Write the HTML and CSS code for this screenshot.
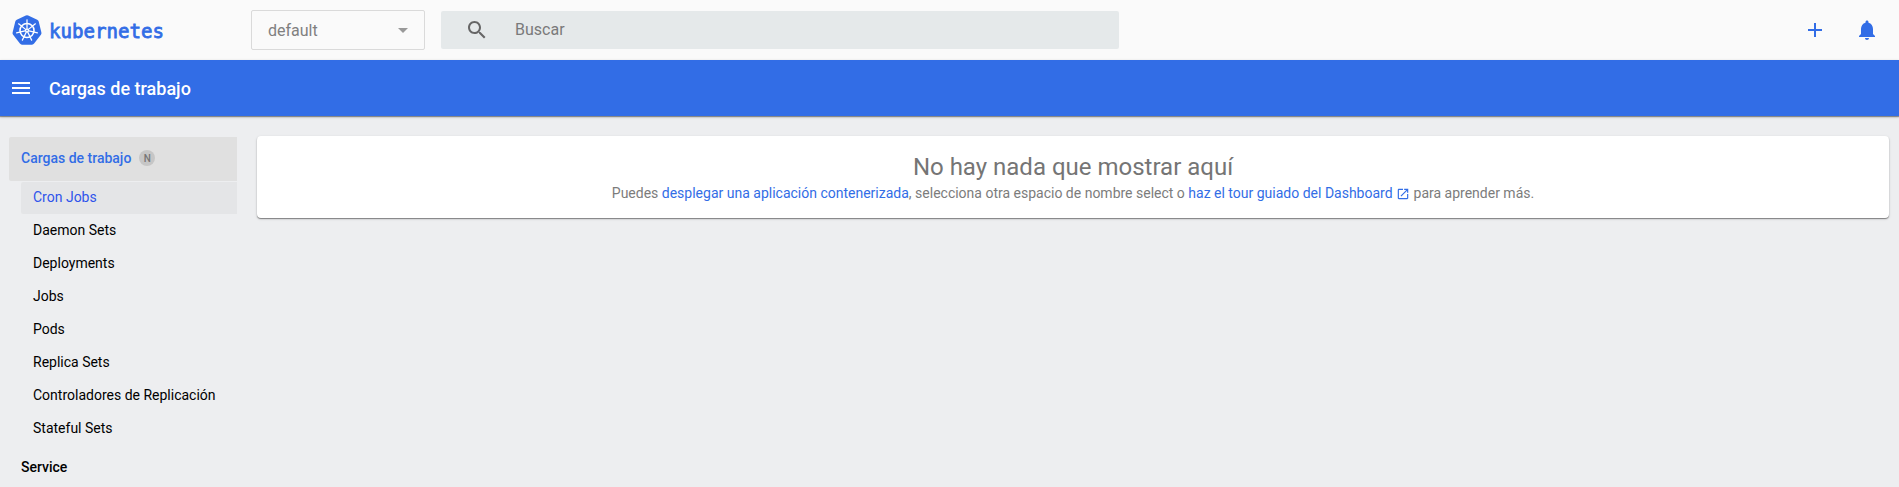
FILE: index.html
```html
<!DOCTYPE html>
<html lang="es">
<head>
<meta charset="utf-8">
<title>Kubernetes Dashboard</title>
<link rel="stylesheet" href="styles.css">
</head>
<body>
<header class="topbar">
  <a class="brand">
    <svg class="brand-mark" width="30" height="30" viewBox="0 0 30 30">
      <path d="M13.8.4Q15 0 16.2.4L25.2 4.7Q26.4 5.3 26.7 6.6L29.4 17.5Q29.7 18.7 28.9 19.8L22.1 28.6Q21.3 29.7 20 29.7H10Q8.700 29.7 7.900 28.6L1.100 19.800Q.3 18.700.6 17.500L3.300 6.600Q3.600 5.300 4.800 4.700Z" fill="#326de6"/>
      <g fill="none" stroke="#fff">
        <circle cx="15" cy="15.500" r="7" stroke-width="1.600"/>
        <g stroke-width="1.250" stroke-linecap="round">
          <path d="M15 14.500V4.800"/>
          <path d="M15 14.500V4.800" transform="rotate(51.430 15 15.500)"/>
          <path d="M15 14.500V4.800" transform="rotate(102.860 15 15.500)"/>
          <path d="M15 14.500V4.800" transform="rotate(154.290 15 15.500)"/>
          <path d="M15 14.500V4.800" transform="rotate(205.710 15 15.500)"/>
          <path d="M15 14.500V4.800" transform="rotate(257.140 15 15.500)"/>
          <path d="M15 14.500V4.800" transform="rotate(308.570 15 15.500)"/>
        </g>
      </g>
      <circle cx="15" cy="15.500" r="2" fill="#fff"/>
      <circle cx="15" cy="15.500" r=".7" fill="#326de6"/>
    </svg>
    <svg class="brand-name" width="122" height="30" viewBox="0 0 122 30">
      <text x="0" y="22.500" textLength="115" lengthAdjust="spacingAndGlyphs">kubernetes</text>
    </svg>
  </a>
  <div class="namespace"><span>default</span><i class="caret"></i></div>
  <div class="search">
    <svg width="24" height="24" viewBox="0 0 24 24"><path fill="#666" d="M15.500 14h-.79l-.28-.27C15.410 12.590 16 11.110 16 9.500 16 5.910 13.090 3 9.500 3S3 5.910 3 9.500 5.910 16 9.500 16c1.610 0 3.090-.59 4.230-1.570l.27.28v.79l5 4.990L20.490 19l-4.990-5zm-6 0C7.010 14 5 11.990 5 9.500S7.010 5 9.500 5 14 7.010 14 9.500 11.990 14 9.500 14z"/></svg>
    <span>Buscar</span>
  </div>
  <div class="actions">
    <svg width="24" height="24" viewBox="0 0 24 24"><path fill="#326de6" d="M19 13h-6v6h-2v-6H5v-2h6V5h2v6h6v2z"/></svg>
    <svg width="24" height="24" viewBox="0 0 24 24"><path fill="#326de6" d="M12 22c1.100 0 2-.9 2-2h-4c0 1.100.89 2 2 2zm6-6v-5c0-3.070-1.640-5.640-4.500-6.320V4c0-.83-.67-1.500-1.500-1.500s-1.500.67-1.500 1.500v.68C7.630 5.360 6 7.920 6 11v5l-2 2v1h16v-1l-2-2z"/></svg>
  </div>
</header>
<div class="titlebar">
  <svg width="24" height="24" viewBox="0 0 24 24"><path fill="#fff" d="M3 18h18v-2H3v2zm0-5h18v-2H3v2zm0-7v2h18V6H3z"/></svg>
  <h1>Cargas de trabajo</h1>
</div>
<div class="layout">
  <nav class="sidebar">
    <a class="group active">Cargas de trabajo<span class="badge">N</span></a>
    <div class="items">
      <a class="item current">Cron Jobs</a>
      <a class="item">Daemon Sets</a>
      <a class="item">Deployments</a>
      <a class="item">Jobs</a>
      <a class="item">Pods</a>
      <a class="item">Replica Sets</a>
      <a class="item">Controladores de Replicación</a>
      <a class="item">Stateful Sets</a>
    </div>
    <a class="group">Service</a>
  </nav>
  <main class="card">
    <h2>No hay nada que mostrar aquí</h2>
    <p>Puedes <a>desplegar una aplicación contenerizada</a>, selecciona otra espacio de nombre select o <a>haz el tour guiado del Dashboard <svg class="external" width="14" height="14" viewBox="0 0 24 24"><path fill="currentColor" d="M19 19H5V5h7V3H5c-1.110 0-2 .9-2 2v14c0 1.100.89 2 2 2h14c1.100 0 2-.9 2-2v-7h-2v7zM14 3v2h3.590l-9.830 9.830 1.410 1.410L19 6.410V10h2V3h-7z"/></svg></a> para aprender más.</p>
  </main>
</div>
</body>
</html>
```
FILE: styles.css
```css
* { box-sizing: border-box; }
body {
  margin: 0;
  height: 487px;
  overflow: hidden;
  background: #edeef0;
  color: #000;
  font: 14px/20px Roboto, sans-serif;
}
svg { flex: none; display: block; }
.topbar {
  display: flex;
  align-items: center;
  height: 60px;
  padding: 0 20px 0 12px;
  background: #fafafa;
}
.brand { display: flex; align-items: center; gap: 7px; width: 239px; }
.brand-name { overflow: visible; }
.brand-name text {
  font: 20px/24px "DejaVu Sans Mono", monospace;
  fill: #326de6;
  stroke: #326de6;
  stroke-width: .8px;
}
.namespace {
  display: flex;
  align-items: center;
  justify-content: space-between;
  width: 174px;
  height: 40px;
  padding: 1px 16px 0;
  border: 1px solid #dadada;
  border-radius: 2px;
  color: #808080;
  font-size: 16px;
}
.caret {
  border: 5px solid transparent;
  border-top-color: #999;
  border-bottom: 0;
}
.search {
  display: flex;
  align-items: center;
  gap: 26px;
  width: 678px;
  height: 38px;
  margin-left: 16px;
  padding-left: 24px;
  border-radius: 2px;
  background: #e5e9ea;
  color: #7a7a7a;
  font-size: 16px;
}
.actions { display: flex; gap: 28px; margin-left: auto; }
.titlebar {
  display: flex;
  align-items: center;
  gap: 16px;
  height: 56px;
  padding-left: 9px;
  background: #326de6;
  box-shadow: 0 1px 1px rgba(0, 0, 0, .35), 0 1px 3px rgba(0, 0, 0, .2);
}
.titlebar h1 { margin: 0; padding-top: 2px; color: #fff; font-size: 18px; font-weight: 500; }
.layout { display: flex; align-items: flex-start; gap: 20px; padding: 20px 10px 0 9px; }
.sidebar { width: 228px; padding-top: 1px; flex: none; }
.group { display: flex; align-items: center; height: 44px; padding-left: 12px; font-weight: 500; }
.group.active { padding-bottom: 2px; background: #e0e0e0; color: #326de6; border-radius: 2px 0 0 2px; }
.badge {
  width: 16px;
  height: 16px;
  margin-left: 8px;
  border-radius: 50%;
  background: #c6c6c6;
  color: #757575;
  font-size: 10px;
  line-height: 17px;
  text-align: center;
}
.items { display: grid; gap: 1px; padding: 1px 0 0 12px; }
.item { height: 32px; padding-left: 12px; line-height: 31px; }
.item.current { background: #e4e5e7; color: #2f54eb; border-radius: 2px 0 0 2px; }
.card {
  flex: 1;
  height: 82px;
  padding-top: 16px;
  border-radius: 4px;
  background: #fff;
  box-shadow: 0 1px 1px rgba(0, 0, 0, .4), 0 1px 3px rgba(0, 0, 0, .15);
  color: #7c7c7c;
  text-align: center;
}
.card h2 { margin: 0; color: #757575; font-size: 24px; font-weight: 400; line-height: 30px; }
.card p { margin: 0; line-height: 22px; }
.card a { color: #326de6; }
.external { display: inline-block; vertical-align: -3px; }
```
